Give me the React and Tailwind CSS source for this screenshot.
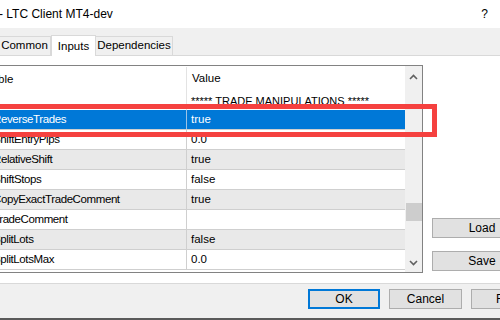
const rows = [
  { name: 'ReverseTrades', value: 'true', selected: true },
  { name: 'ShiftEntryPips', value: '0.0' },
  { name: 'RelativeShift', value: 'true', shade: true },
  { name: 'ShiftStops', value: 'false' },
  { name: 'CopyExactTradeComment', value: 'true', shade: true },
  { name: 'TradeComment', value: '' },
  { name: 'SplitLots', value: 'false', shade: true },
  { name: 'SplitLotsMax', value: '0.0' },
]

function Chevron({ up }) {
  return (
    <svg width="9" height="6" viewBox="0 0 9 6" className="block">
      <path d={up ? 'M1 5 L4.5 1.5 L8 5' : 'M1 1 L4.5 4.5 L8 1'} fill="none" stroke="#606060" strokeWidth="1.6" />
    </svg>
  )
}

function WinButton({ children, focused, className = '' }) {
  return (
    <div className={`flex h-[20px] items-center justify-center bg-[#e1e1e1] text-[12px] text-black ${focused ? 'border-2 border-[#0078d7]' : 'border border-[#adadad]'} ${className}`}>
      {children}
    </div>
  )
}

export default function App() {
  return (
    <div className="relative flex h-[320px] w-[500px] flex-col overflow-hidden bg-[#f0f0f0] font-['Liberation_Sans',Arial,sans-serif] text-black">
      {/* title bar */}
      <div className="flex h-[28px] shrink-0 items-center justify-between bg-white pr-[12px]">
        <span className="-ml-[1px] text-[12px]">- LTC Client MT4-dev</span>
        <span className="text-[12px]">?</span>
      </div>

      {/* tabs */}
      <div className="flex h-[27px] shrink-0 items-end">
        <div className="-ml-[2px] flex h-[19px] w-[53px] items-center justify-center border border-b-0 border-[#d9d9d9] bg-[#f0f0f0] text-[11.5px]">Common</div>
        <div className="z-10 -mb-px flex h-[21px] w-[45px] items-start justify-center border border-b-0 border-[#d9d9d9] bg-white pt-[2px] text-[11.5px]">Inputs</div>
        <div className="flex h-[19px] w-[77px] items-center justify-center border border-b-0 border-l-0 border-[#d9d9d9] bg-[#f0f0f0] text-[11.5px]">Dependencies</div>
      </div>

      {/* panel */}
      <div className="flex h-[229px] shrink-0 items-start gap-[9px] border-y border-[#d9d9d9] bg-white pt-[9px]">
        <div className="-ml-[10px] flex h-[208px] w-[433px] shrink-0 border border-[#828282] text-[11.5px]">
          <div className="flex w-[414px] flex-col overflow-hidden">
            <div className="flex h-[24px] shrink-0 items-center pt-[1px]">
              <div className="h-full w-[196px] shrink-0 overflow-hidden border-r border-[#e3e3e3] leading-[24px]">
                <span className="-ml-[19px]">Variable</span>
              </div>
              <div className="pl-[5px]">Value</div>
            </div>
            <div className="flex h-[20px] shrink-0 items-center">
              <div className="h-full w-[196px] shrink-0 border-r border-[#e3e3e3]"></div>
              <div className="pl-[4px] pt-[3px] text-[11px]">***** TRADE MANIPULATIONS *****</div>
            </div>
            {rows.map((row) => (
              <div
                key={row.name}
                className={`flex h-[20px] shrink-0 border-b border-[#cfcfcf] ${row.selected ? 'bg-[#0078d7] text-white' : row.shade ? 'bg-[#e9e9e9]' : 'bg-white'}`}
              >
                <div className={`flex w-[196px] shrink-0 items-center border-r pl-[2px] pt-[1px] tracking-[-0.4px] ${row.selected ? 'border-[#9cc3e6]' : 'border-[#cfcfcf]'}`}>{row.name}</div>
                <div className="flex items-center pl-[4px] pt-[1px]">{row.value}</div>
              </div>
            ))}
          </div>
          <div className="flex w-[17px] shrink-0 flex-col items-center bg-[#f0f0f0] pt-[8px]">
            <Chevron up />
            <div className="mt-[123px] h-[18px] w-[16px] bg-[#cdcdcd]"></div>
            <div className="mt-[39px]">
              <Chevron />
            </div>
          </div>
        </div>
        <div className="flex flex-col gap-[13px] pt-[153px]">
          <WinButton className="w-[100px]">Load</WinButton>
          <WinButton className="w-[100px]">Save</WinButton>
        </div>
      </div>

      {/* bottom buttons */}
      <div className="flex h-[34px] shrink-0 gap-[9px] pl-[308px] pt-[5px]">
        <WinButton focused className="w-[72px] shrink-0">OK</WinButton>
        <WinButton className="w-[73px] shrink-0">Cancel</WinButton>
        <WinButton className="w-[60px] shrink-0 justify-start pl-[24px]">Reset</WinButton>
      </div>
      <div className="h-[2px] shrink-0 bg-[#5a5a5a]"></div>

      {/* highlight annotation */}
      <div className="absolute left-[-10px] top-[104px] h-[33px] w-[447px] border-[5px] border-[#f5413f]"></div>
    </div>
  )
}
